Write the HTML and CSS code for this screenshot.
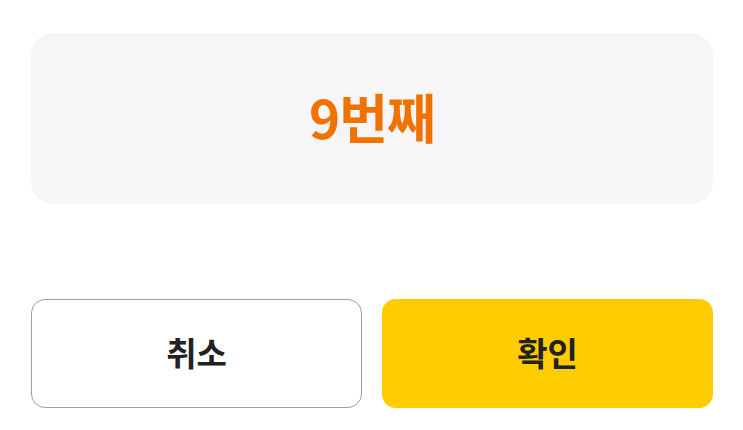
FILE: index.html
```html
<!DOCTYPE html>
<html lang="ko">
<head>
<meta charset="utf-8">
<link rel="stylesheet" href="styles.css">
</head>
<body>
<div class="dialog">
  <div class="value-box"><span class="value">9번째</span></div>
  <div class="actions">
    <button class="btn btn-cancel">취소</button>
    <button class="btn btn-ok">확인</button>
  </div>
</div>
</body>
</html>
```

FILE: styles.css
```css
html, body {
  margin: 0;
  padding: 0;
  background: #ffffff;
}
body {
  font-family: "Noto Sans CJK KR", "Noto Sans", sans-serif;
}
.dialog {
  padding: 33px 30px 0 31px;
  display: flex;
  flex-direction: column;
}
.value-box {
  height: 171px;
  background: #f6f6f8;
  border-radius: 22px;
  display: flex;
  align-items: center;
  justify-content: center;
}
.value {
  color: #f07200;
  font-size: 53px;
  font-weight: 700;
  letter-spacing: -1px;
  line-height: 1;
  margin-top: -4px;
}
.actions {
  margin-top: 95px;
  display: grid;
  grid-template-columns: 1fr 1fr;
  gap: 20px;
}
.btn {
  height: 109px;
  border-radius: 14px;
  font-family: inherit;
  font-size: 33px;
  font-weight: 700;
  color: #222222;
  display: flex;
  align-items: center;
  justify-content: center;
  padding: 0 0 4px 0;
}
.btn-cancel {
  background: #ffffff;
  border: 1px solid #9aa0a6;
}
.btn-ok {
  background: #ffcc00;
  border: none;
}
```
